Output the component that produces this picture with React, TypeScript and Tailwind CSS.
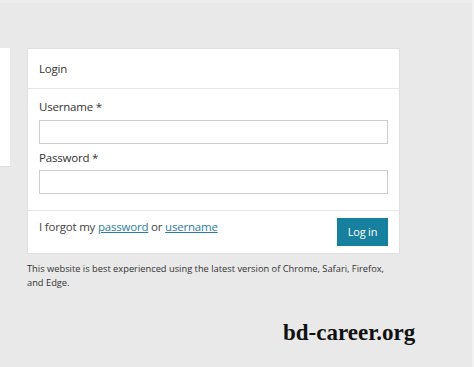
import React from "react";

export default function App() {
  return (
    <div className="w-[474px] h-[367px] bg-[#e9e9e9] overflow-hidden relative" style={{ fontFamily: '"Open Sans", "Noto Sans", sans-serif' }}>
      <div className="h-[3px] bg-[#eeeeee]" />
      <div className="flex items-start pt-[45px]">
        <div className="w-[10px] h-[119px] bg-white border-b border-[#dedede]" />
        <div className="ml-[17px] w-[373px] flex flex-col">
          <div className="bg-white border border-[#e0e0e0] text-[#333]">
            <div className="h-[40px] flex items-center px-[11px] border-b border-[#e6e6e6] text-[11.5px] tracking-[-0.2px]">Login</div>
            <div className="px-[11px] pt-[9px] pb-[16px] border-b border-[#e6e6e6]">
              <div className="text-[11.5px] leading-[18px] font-medium tracking-[-0.2px]">Username *</div>
              <div className="mt-[4px] h-[24px] border border-[#cccccc] bg-white" />
              <div className="mt-[5px] text-[11.5px] leading-[18px] font-medium tracking-[-0.2px]">Password *</div>
              <div className="mt-[3px] h-[24px] border border-[#cccccc] bg-white" />
            </div>
            <div className="flex items-start justify-between px-[11px] pt-[7px] pb-[7px]">
              <div className="text-[11.5px] leading-[18px] text-[#444] tracking-[-0.2px]">
                I forgot my <span className="text-[#2c7ea3] underline">password</span> or <span className="text-[#2c7ea3] underline">username</span>
              </div>
              <div className="w-[51px] h-[28px] bg-[#17809f] text-white text-[11px] flex items-center justify-center tracking-[-0.2px]">Log in</div>
            </div>
          </div>
          <div className="mt-[8px] text-[9.3px] leading-[14px] text-[#333]">
            This website is best experienced using the latest version of Chrome, Safari, Firefox, and Edge.
          </div>
          <div className="mt-[30px] ml-[256px] text-[23px] leading-[26px] font-bold text-[#111] whitespace-nowrap" style={{ fontFamily: '"Liberation Serif", serif' }}>
            bd-career.org
          </div>
        </div>
      </div>
      <div className="absolute top-0 right-0 w-[2px] h-full bg-[#f2f2f2]" />
    </div>
  );
}
